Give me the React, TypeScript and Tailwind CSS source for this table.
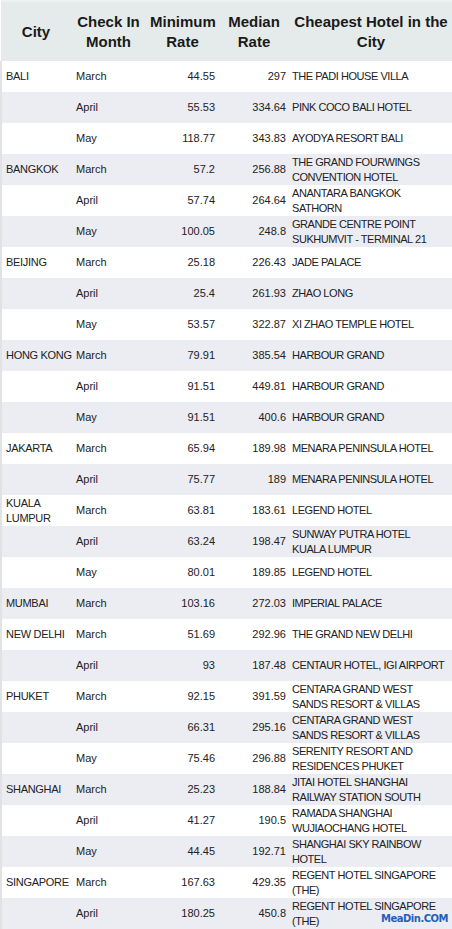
type Row = {
  city?: string;
  month: string;
  min: string;
  median: string;
  hotel: string;
};

// hotel names carry their line breaks as in the source table
const rows: Row[] = [
  { city: "BALI", month: "March", min: "44.55", median: "297", hotel: "THE PADI HOUSE VILLA" },
  { month: "April", min: "55.53", median: "334.64", hotel: "PINK COCO BALI HOTEL" },
  { month: "May", min: "118.77", median: "343.83", hotel: "AYODYA RESORT BALI" },
  { city: "BANGKOK", month: "March", min: "57.2", median: "256.88", hotel: "THE GRAND FOURWINGS\nCONVENTION HOTEL" },
  { month: "April", min: "57.74", median: "264.64", hotel: "ANANTARA BANGKOK\nSATHORN" },
  { month: "May", min: "100.05", median: "248.8", hotel: "GRANDE CENTRE POINT\nSUKHUMVIT - TERMINAL 21" },
  { city: "BEIJING", month: "March", min: "25.18", median: "226.43", hotel: "JADE PALACE" },
  { month: "April", min: "25.4", median: "261.93", hotel: "ZHAO LONG" },
  { month: "May", min: "53.57", median: "322.87", hotel: "XI ZHAO TEMPLE HOTEL" },
  { city: "HONG KONG", month: "March", min: "79.91", median: "385.54", hotel: "HARBOUR GRAND" },
  { month: "April", min: "91.51", median: "449.81", hotel: "HARBOUR GRAND" },
  { month: "May", min: "91.51", median: "400.6", hotel: "HARBOUR GRAND" },
  { city: "JAKARTA", month: "March", min: "65.94", median: "189.98", hotel: "MENARA PENINSULA HOTEL" },
  { month: "April", min: "75.77", median: "189", hotel: "MENARA PENINSULA HOTEL" },
  { city: "KUALA\nLUMPUR", month: "March", min: "63.81", median: "183.61", hotel: "LEGEND HOTEL" },
  { month: "April", min: "63.24", median: "198.47", hotel: "SUNWAY PUTRA HOTEL\nKUALA LUMPUR" },
  { month: "May", min: "80.01", median: "189.85", hotel: "LEGEND HOTEL" },
  { city: "MUMBAI", month: "March", min: "103.16", median: "272.03", hotel: "IMPERIAL PALACE" },
  { city: "NEW DELHI", month: "March", min: "51.69", median: "292.96", hotel: "THE GRAND NEW DELHI" },
  { month: "April", min: "93", median: "187.48", hotel: "CENTAUR HOTEL, IGI AIRPORT" },
  { city: "PHUKET", month: "March", min: "92.15", median: "391.59", hotel: "CENTARA GRAND WEST\nSANDS RESORT & VILLAS" },
  { month: "April", min: "66.31", median: "295.16", hotel: "CENTARA GRAND WEST\nSANDS RESORT & VILLAS" },
  { month: "May", min: "75.46", median: "296.88", hotel: "SERENITY RESORT AND\nRESIDENCES PHUKET" },
  { city: "SHANGHAI", month: "March", min: "25.23", median: "188.84", hotel: "JITAI HOTEL SHANGHAI\nRAILWAY STATION SOUTH" },
  { month: "April", min: "41.27", median: "190.5", hotel: "RAMADA SHANGHAI\nWUJIAOCHANG HOTEL" },
  { month: "May", min: "44.45", median: "192.71", hotel: "SHANGHAI SKY RAINBOW\nHOTEL" },
  { city: "SINGAPORE", month: "March", min: "167.63", median: "429.35", hotel: "REGENT HOTEL SINGAPORE\n(THE)" },
  { month: "April", min: "180.25", median: "450.8", hotel: "REGENT HOTEL SINGAPORE\n(THE)" },
];

export default function App() {
  return (
    <div className="relative w-[452px] h-[929px] overflow-hidden bg-white font-['Liberation_Sans',Arial,sans-serif] text-[#222]">
      <table className="w-[452px] table-fixed border-collapse">
        <colgroup>
          <col className="w-[70px]" />
          <col className="w-[75px]" />
          <col className="w-[73px]" />
          <col className="w-[70px]" />
          <col className="w-[164px]" />
        </colgroup>
        <thead>
          <tr className="h-[60px] bg-[#e5ebea] border-t-2 border-[#edf1f0] text-[15px] leading-[20px] font-bold text-[#1a1a1a]">
            <th className="px-1 text-center">City</th>
            <th className="px-1 text-center">Check In Month</th>
            <th className="px-1 text-center">Minimum Rate</th>
            <th className="px-1 text-center">Median Rate</th>
            <th className="px-1 text-center">Cheapest Hotel in the City</th>
          </tr>
        </thead>
        <tbody className="text-[11px] leading-[15px]">
          {rows.map((r, i) => (
            <tr key={i} className={i % 2 === 0 ? "h-[31px] bg-white" : "h-[31px] bg-[#ececf3]"}>
              <td className="pl-1 border-l-2 border-[#e2e2e2] tracking-[-0.3px] whitespace-pre align-middle">{r.city}</td>
              <td className="pl-[5px] align-middle">{r.month}</td>
              <td className="pr-1 text-right align-middle">{r.min}</td>
              <td className="pr-[3px] text-right align-middle">{r.median}</td>
              <td className="pl-[3px] tracking-[-0.45px] whitespace-pre align-middle">{r.hotel}</td>
            </tr>
          ))}
        </tbody>
      </table>
      <div className="absolute right-[4px] bottom-[3px] font-['DejaVu_Sans',Verdana,sans-serif] text-[10px] font-bold tracking-[-0.5px] text-[#2461b4]">
        MeaDin.COM
      </div>
    </div>
  );
}
